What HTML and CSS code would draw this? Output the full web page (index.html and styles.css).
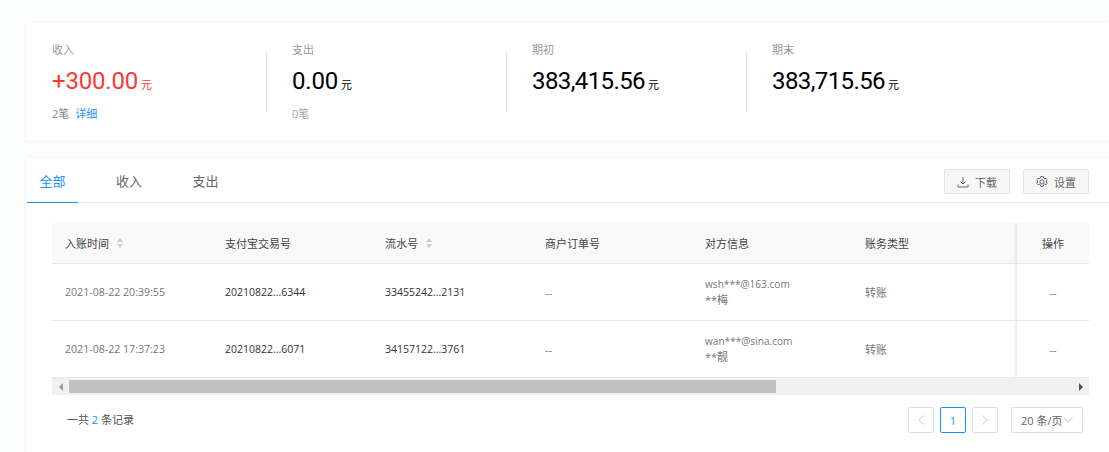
FILE: index.html
```html
<!DOCTYPE html>
<html lang="zh">
<head>
<meta charset="utf-8">
<title>账务明细</title>
<link rel="stylesheet" href="styles.css">
</head>
<body>
<section class="summary">
  <div class="stat">
    <div class="stat-label">收入</div>
    <div class="stat-value income"><span class="num">+300.00</span><span class="unit">元</span></div>
    <div class="stat-foot">2笔<a class="link">详细</a></div>
  </div>
  <div class="stat">
    <div class="stat-label">支出</div>
    <div class="stat-value"><span class="num">0.00</span><span class="unit">元</span></div>
    <div class="stat-foot muted">0笔</div>
  </div>
  <div class="stat">
    <div class="stat-label">期初</div>
    <div class="stat-value"><span class="num long">383,415.56</span><span class="unit">元</span></div>
  </div>
  <div class="stat">
    <div class="stat-label">期末</div>
    <div class="stat-value"><span class="num long">383,715.56</span><span class="unit">元</span></div>
  </div>
</section>

<section class="panel">
  <div class="tabbar">
    <div class="tab active">全部</div>
    <div class="tab">收入</div>
    <div class="tab">支出</div>
    <div class="actions">
      <button class="btn">
        <svg class="btn-icon" viewBox="0 0 12 12"><path d="M6 1v7M3.6 5.6 6 8l2.4-2.4M1 8.5v2.5h10V8.5" fill="none" stroke="#666" stroke-width="1"/></svg>下载
      </button>
      <button class="btn">
        <svg class="btn-icon" viewBox="0.5 0.5 11 11"><path d="M6 .8l1.1.3.3 1.3 1.1.6 1.3-.4.9 1.1-.7 1.2v1.2l.7 1.2-.9 1.1-1.3-.4-1.1.6-.3 1.3-1.1.3-1.1-.3-.3-1.3-1.1-.6-1.3.4-.9-1.1.7-1.2V4.9l-.7-1.2.9-1.1 1.3.4 1.1-.6.3-1.3z" fill="none" stroke="#666" stroke-width=".9"/><circle cx="6" cy="5.9" r="1.9" fill="none" stroke="#666" stroke-width=".9"/></svg>设置
      </button>
    </div>
  </div>

  <div class="table">
    <div class="row head">
      <div class="cell">入账时间<span class="sorter"></span></div>
      <div class="cell">支付宝交易号</div>
      <div class="cell">流水号<span class="sorter"></span></div>
      <div class="cell">商户订单号</div>
      <div class="cell">对方信息</div>
      <div class="cell">账务类型</div>
      <div class="cell fixed">操作</div>
    </div>
    <div class="row">
      <div class="cell time">2021-08-22 20:39:55</div>
      <div class="cell dark">20210822...6344</div>
      <div class="cell dark">33455242...2131</div>
      <div class="cell soft">--</div>
      <div class="cell soft info"><span class="mail">wsh***@163.com</span><span>**梅</span></div>
      <div class="cell soft">转账</div>
      <div class="cell fixed soft">--</div>
    </div>
    <div class="row">
      <div class="cell time">2021-08-22 17:37:23</div>
      <div class="cell dark">20210822...6071</div>
      <div class="cell dark">34157122...3761</div>
      <div class="cell soft">--</div>
      <div class="cell soft info"><span class="mail">wan***@sina.com</span><span>**靓</span></div>
      <div class="cell soft">转账</div>
      <div class="cell fixed soft">--</div>
    </div>
    <div class="scrollbar">
      <span class="arrow left"></span>
      <div class="track"><div class="thumb"></div></div>
      <span class="arrow right"></span>
    </div>
  </div>

  <div class="pager">
    <div class="total">一共 <em>2</em> 条记录</div>
    <div class="pages">
      <span class="page off"><svg class="chev" viewBox="0 0 10 10"><path d="M7.5 .5 3 5l4.5 4.5" fill="none" stroke="#ccc"/></svg></span>
      <span class="page current">1</span>
      <span class="page off"><svg class="chev" viewBox="0 0 10 10"><path d="M2.5 .5 7 5 2.5 9.5" fill="none" stroke="#ccc"/></svg></span>
      <span class="size">20 条/页<svg class="caret" viewBox="0 0 10 10"><path d="M.5 2.8 5 7.3l4.5-4.5" fill="none" stroke="#bbb"/></svg></span>
    </div>
  </div>
</section>
</body>
</html>
```
FILE: styles.css
```css
* { box-sizing: border-box; }
html, body { margin: 0; height: 452px; overflow: hidden; }
body {
  background: #fbfcfd;
  font-family: "Open Sans", "Noto Sans CJK SC", sans-serif;
  font-size: 12px;
  color: #666;
  padding-top: 23px;
  padding-left: 27px;
}
.summary {
  display: flex;
  height: 117px;
  background: #fff;
  box-shadow: 0 1px 6px rgba(0, 20, 60, .04);
  padding: 20px 0 0 25px;
}
.stat {
  position: relative;
  width: 240px;
  height: 60px;
}
.stat + .stat::before {
  content: "";
  position: absolute;
  left: -26px;
  top: 8px;
  width: 1px;
  height: 60px;
  background: #e6e6e6;
}
.stat-label { font-size: 11px; line-height: 14px; color: #999; }
.stat-value {
  display: flex;
  align-items: baseline;
  height: 28px;
  margin-top: 10px;
  color: #000;
}
.stat-value.income { color: #fa3a30; }
.num {
  font-family: Roboto, sans-serif;
  font-size: 24px;
  line-height: 28px;
  letter-spacing: -.2px;
}
.num.long { letter-spacing: -.6px; }
.unit { font-size: 11px; margin-left: 3px; }
.stat-foot { margin-top: 11px; font-size: 11px; line-height: 16px; color: #888; }
.stat-foot.muted { color: #aaa; }
.link { color: #1890ff; margin-left: 6px; }

.panel {
  margin-top: 18px;
  height: 300px;
  background: #fff;
  box-shadow: 0 0 6px rgba(0, 20, 60, .03);
}
.tabbar {
  display: flex;
  align-items: stretch;
  height: 45px;
  border-bottom: 1px solid #e8e8e8;
  padding-right: 20px;
}
.tab {
  width: 51px;
  margin-right: 25.5px;
  text-align: center;
  font-size: 13px;
  line-height: 47px;
  color: #666;
}
.tab.active { color: #1890ff; border-bottom: 1px solid #1890ff; height: 45px; }
.actions { display: flex; gap: 13px; margin-left: auto; padding-top: 11px; height: 36px; }
.btn {
  display: flex;
  align-items: center;
  justify-content: center;
  gap: 6px;
  width: 66px;
  height: 25px;
  padding: 0;
  font: inherit;
  font-size: 11px;
  color: #666;
  background: #f7f7f7;
  border: 1px solid #e4e4e4;
  border-radius: 2px;
}
.btn-icon { width: 12px; height: 12px; }

.table { margin: 20px 20px 0 25px; }
.row {
  display: grid;
  grid-template-columns: repeat(5, 160px) 165px 72px;
  height: 57px;
  border-bottom: 1px solid #e8e8e8;
  background: #fff;
}
.row.head { height: 41px; background: #f9f9f9; color: #444; border-bottom: 1px solid #e6e6e6; }
.cell {
  display: flex;
  align-items: center;
  padding-left: 13px;
  white-space: nowrap;
  font-size: 11px;
  overflow: hidden;
}
.time { color: #777; font-size: 10.6px; }
.dark { color: #333; font-size: 10.5px; }
.soft { color: #777; }
.info { flex-direction: column; align-items: flex-start; justify-content: center; line-height: 16px; }
.mail { font-size: 10.1px; }
.fixed {
  position: relative;
  padding-left: 0;
  justify-content: center;
  overflow: visible;
}
.fixed::before {
  content: "";
  position: absolute;
  left: -4px;
  top: 0;
  bottom: 0;
  width: 4px;
  background: linear-gradient(to right, rgba(0, 0, 0, 0), rgba(0, 0, 0, .08));
}
.sorter {
  display: inline-block;
  position: relative;
  width: 7px;
  height: 10px;
  margin-left: 8px;
}
.sorter::before, .sorter::after {
  content: "";
  position: absolute;
  left: 0;
  border-left: 3.5px solid transparent;
  border-right: 3.5px solid transparent;
}
.sorter::before { top: 0; border-bottom: 4px solid #ccc; }
.sorter::after { bottom: 0; border-top: 4px solid #ccc; }

.scrollbar {
  display: flex;
  align-items: center;
  height: 17px;
  background: #f1f1f1;
}
.arrow { width: 17px; display: flex; justify-content: center; }
.arrow::before {
  content: "";
  border-top: 4px solid transparent;
  border-bottom: 4px solid transparent;
}
.arrow.left::before { border-right: 4px solid #999; }
.arrow.right::before { border-left: 4px solid #505050; }
.track { flex: 1; height: 13px; }
.thumb { width: 707px; height: 13px; background: #c1c1c1; }

.pager {
  display: flex;
  align-items: center;
  justify-content: space-between;
  margin: 12px 26px 0 40px;
  height: 26px;
}
.total { font-size: 11px; color: #555; padding-bottom: 2px; }
.total em { font-style: normal; color: #1890ff; }
.pages { display: flex; align-items: center; }
.page {
  display: flex;
  align-items: center;
  justify-content: center;
  width: 26px;
  height: 26px;
  margin-right: 6px;
  border: 1px solid #ddd;
  border-radius: 2px;
  font-size: 11px;
}
.page.current { color: #1890ff; border-color: #1890ff; }
.page.off { background: #fff; }
.page.off + .current + .off { margin-right: 13px; }
.chev { width: 10px; height: 10px; }
.size {
  display: flex;
  align-items: center;
  justify-content: space-between;
  width: 72px;
  height: 26px;
  padding: 0 9px;
  border: 1px solid #ddd;
  border-radius: 2px;
  font-size: 11px;
  color: #666;
  white-space: nowrap;
}
.caret { width: 10px; height: 10px; flex: none; }
```
